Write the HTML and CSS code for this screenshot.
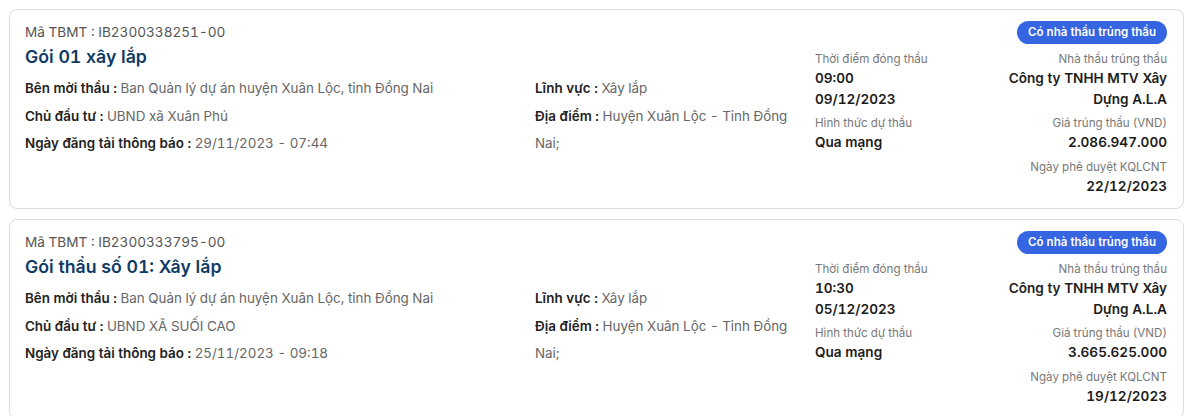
FILE: index.html
```html
<!DOCTYPE html>
<html lang="vi">
<head>
  <meta charset="UTF-8" />
  <meta name="viewport" content="width=device-width, initial-scale=1.0" />
  <title>Kết quả lựa chọn nhà thầu</title>
  <link rel="stylesheet" href="styles.css">
</head>
<body>
  <div class="list">
    <div class="card">
      <div class="main">
        <div class="code">Mã TBMT : IB2300338251-00</div>
        <div class="title">Gói 01 xây lắp</div>
        <div class="fields">
          <div class="fields-col">
            <div class="field"><b>Bên mời thầu :</b> Ban Quản lý dự án huyện Xuân Lộc, tỉnh Đồng Nai</div>
            <div class="field"><b>Chủ đầu tư :</b> UBND xã Xuân Phú</div>
            <div class="field"><b>Ngày đăng tải thông báo :</b> 29/11/2023 - 07:44</div>
          </div>
          <div class="fields-col">
            <div class="field"><b>Lĩnh vực :</b> Xây lắp</div>
            <div class="field"><b>Địa điểm :</b> Huyện Xuân Lộc - Tỉnh Đồng Nai;</div>
          </div>
        </div>
      </div>
      <div class="side">
        <div class="badge-row"><span class="badge">Có nhà thầu trúng thầu</span></div>
        <div class="side-cols">
          <div class="col">
            <div class="item">
              <div class="label">Thời điểm đóng thầu</div>
              <div class="value">09:00<br>09/12/2023</div>
            </div>
            <div class="item">
              <div class="label">Hình thức dự thầu</div>
              <div class="value">Qua mạng</div>
            </div>
          </div>
          <div class="col col-right">
            <div class="item">
              <div class="label">Nhà thầu trúng thầu</div>
              <div class="value">Công ty TNHH MTV Xây Dựng A.L.A</div>
            </div>
            <div class="item">
              <div class="label">Giá trúng thầu (VND)</div>
              <div class="value">2.086.947.000</div>
            </div>
            <div class="item">
              <div class="label">Ngày phê duyệt KQLCNT</div>
              <div class="value">22/12/2023</div>
            </div>
          </div>
        </div>
      </div>
    </div>

    <div class="card">
      <div class="main">
        <div class="code">Mã TBMT : IB2300333795-00</div>
        <div class="title">Gói thầu số 01: Xây lắp</div>
        <div class="fields">
          <div class="fields-col">
            <div class="field"><b>Bên mời thầu :</b> Ban Quản lý dự án huyện Xuân Lộc, tỉnh Đồng Nai</div>
            <div class="field"><b>Chủ đầu tư :</b> UBND XÃ SUỐI CAO</div>
            <div class="field"><b>Ngày đăng tải thông báo :</b> 25/11/2023 - 09:18</div>
          </div>
          <div class="fields-col">
            <div class="field"><b>Lĩnh vực :</b> Xây lắp</div>
            <div class="field"><b>Địa điểm :</b> Huyện Xuân Lộc - Tỉnh Đồng Nai;</div>
          </div>
        </div>
      </div>
      <div class="side">
        <div class="badge-row"><span class="badge">Có nhà thầu trúng thầu</span></div>
        <div class="side-cols">
          <div class="col">
            <div class="item">
              <div class="label">Thời điểm đóng thầu</div>
              <div class="value">10:30<br>05/12/2023</div>
            </div>
            <div class="item">
              <div class="label">Hình thức dự thầu</div>
              <div class="value">Qua mạng</div>
            </div>
          </div>
          <div class="col col-right">
            <div class="item">
              <div class="label">Nhà thầu trúng thầu</div>
              <div class="value">Công ty TNHH MTV Xây Dựng A.L.A</div>
            </div>
            <div class="item">
              <div class="label">Giá trúng thầu (VND)</div>
              <div class="value">3.665.625.000</div>
            </div>
            <div class="item">
              <div class="label">Ngày phê duyệt KQLCNT</div>
              <div class="value">19/12/2023</div>
            </div>
          </div>
        </div>
      </div>
    </div>
  </div>
</body>
</html>
```

FILE: styles.css
```css
body {
  margin: 0;
  font-family: Inter, 'Noto Sans', sans-serif;
  font-variant-numeric: tabular-nums;
  background: #fff;
  color: #222;
}
.list {
  padding: 9px 16px 0 9px;
  display: flex;
  flex-direction: column;
  gap: 10px;
}
.card {
  display: grid;
  grid-template-columns: 1fr 352px;
  gap: 24px;
  padding: 11px 16px 7px 15px;
  border: 1px solid #dcdcdc;
  border-radius: 8px;
  background: #fff;
}
.code {
  font-size: 13.6px;
  line-height: 23px;
  color: #555;
}
.title {
  font-size: 17.7px;
  line-height: 26px;
  font-weight: 600;
  color: #0f3a66;
}
.fields {
  margin-top: 5px;
  display: flex;
}
.fields-col {
  flex: 1;
}
.fields-col:first-child {
  flex: 0 0 510px;
}
.field {
  font-size: 13.4px;
  line-height: 27.5px;
  color: #666;
}
.field b {
  color: #222;
  font-weight: 600;
}
.badge-row {
  display: flex;
  justify-content: flex-end;
}
.badge {
  background: #3565e0;
  color: #fff;
  font-size: 11.5px;
  font-weight: 600;
  line-height: 23px;
  padding: 0 11px;
  border-radius: 12px;
}
.side-cols {
  margin-top: 6px;
  display: grid;
  grid-template-columns: 1fr 1fr;
}
.col-right {
  text-align: right;
}
.item {
  margin-bottom: 5px;
}
.label {
  font-size: 11.6px;
  line-height: 18px;
  color: #777;
}
.value {
  font-size: 13.6px;
  line-height: 20.5px;
  font-weight: 600;
  color: #1c1c1c;
}
```
